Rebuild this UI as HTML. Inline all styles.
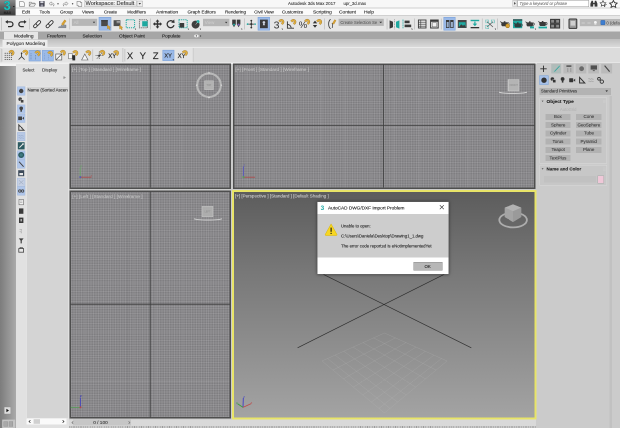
<!DOCTYPE html><html><head><meta charset="utf-8"><title>Autodesk 3ds Max 2017</title><style>
html,body{margin:0;padding:0}
body{width:620px;height:428px;overflow:hidden;background:#cbcbcb;font-family:"Liberation Sans",sans-serif;position:relative;color:#222}
#o{position:absolute;left:0;top:0;width:1240px;height:856px;transform:scale(.5);transform-origin:0 0;will-change:transform;overflow:hidden}
#w{position:relative;zoom:2;width:620px;height:428px;overflow:hidden;background:#cbcbcb}
.a{position:absolute}
.t{position:absolute;white-space:nowrap;line-height:1;transform-origin:0 50%;-webkit-text-stroke:.1px currentColor}
svg{position:absolute;overflow:visible}
.vp{position:absolute;background-color:#7f7e81;border:1.5px solid #4e4e4e;box-sizing:border-box;overflow:hidden;
 background-image:repeating-linear-gradient(90deg,rgba(255,255,255,.10) 0,rgba(255,255,255,.10) 1px,transparent 1px,transparent 2.45px),repeating-linear-gradient(0deg,rgba(255,255,255,.10) 0,rgba(255,255,255,.10) 1px,transparent 1px,transparent 2.45px)}
</style></head><body><div id="o"><div id="w">
<div class="a" style="left:0.00px;top:0.00px;width:620.00px;height:7.60px;background:#f7f7f7;"></div>
<div class="a" style="left:0.00px;top:7.60px;width:620.00px;height:7.60px;background:#fbfbfb;"></div>
<div class="a" style="left:15.60px;top:7.50px;width:604.40px;height:0.80px;background:#cfcfcf;"></div>
<div class="a" style="left:0.00px;top:15.20px;width:620.00px;height:0.80px;background:#d0d0d0;"></div>
<div class="a" style="left:0.00px;top:16.00px;width:620.00px;height:15.30px;background:#e6e6e6;"></div>
<div class="a" style="left:0.00px;top:31.30px;width:620.00px;height:7.90px;background:#a6a6a6;"></div>
<div class="a" style="left:0.00px;top:39.20px;width:620.00px;height:8.00px;background:linear-gradient(#bebebe,#dadada);"></div>
<div class="a" style="left:0.00px;top:47.20px;width:620.00px;height:15.20px;background:#dcdcdc;"></div>
<div class="a" style="left:2.00px;top:47.60px;width:120.40px;height:14.80px;background:#e4e4e4;"></div>
<div class="a" style="left:124.00px;top:47.60px;width:69.00px;height:14.80px;background:#e4e4e4;"></div>
<div class="a" style="left:0.00px;top:47.20px;width:620.00px;height:0.60px;background:#ececec;"></div>
<div class="a" style="left:0.00px;top:62.40px;width:620.00px;height:1.60px;background:#efefef;"></div>
<div class="t" style="left:22.00px;top:9.50px;font-size:4.75px;color:#1c1c1c;transform:scaleX(0.977);">Edit</div>
<div class="t" style="left:39.50px;top:9.50px;font-size:4.75px;color:#1c1c1c;transform:scaleX(0.947);">Tools</div>
<div class="t" style="left:60.00px;top:9.50px;font-size:4.75px;color:#1c1c1c;transform:scaleX(0.985);">Group</div>
<div class="t" style="left:82.00px;top:9.50px;font-size:4.75px;color:#1c1c1c;transform:scaleX(0.953);">Views</div>
<div class="t" style="left:104.00px;top:9.50px;font-size:4.75px;color:#1c1c1c;transform:scaleX(0.912);">Create</div>
<div class="t" style="left:127.00px;top:9.50px;font-size:4.75px;color:#1c1c1c;transform:scaleX(0.986);">Modifiers</div>
<div class="t" style="left:155.80px;top:9.50px;font-size:4.75px;color:#1c1c1c;transform:scaleX(1.051);">Animation</div>
<div class="t" style="left:187.50px;top:9.50px;font-size:4.75px;color:#1c1c1c;transform:scaleX(0.966);">Graph Editors</div>
<div class="t" style="left:225.00px;top:9.50px;font-size:4.75px;color:#1c1c1c;transform:scaleX(0.958);">Rendering</div>
<div class="t" style="left:254.00px;top:9.50px;font-size:4.75px;color:#1c1c1c;transform:scaleX(0.966);">Civil View</div>
<div class="t" style="left:281.80px;top:9.50px;font-size:4.75px;color:#1c1c1c;transform:scaleX(0.945);">Customize</div>
<div class="t" style="left:313.00px;top:9.50px;font-size:4.75px;color:#1c1c1c;transform:scaleX(1.017);">Scripting</div>
<div class="t" style="left:339.00px;top:9.50px;font-size:4.75px;color:#1c1c1c;transform:scaleX(1.022);">Content</div>
<div class="t" style="left:363.80px;top:9.50px;font-size:4.75px;color:#1c1c1c;transform:scaleX(1.024);">Help</div>
<div class="t" style="left:288.00px;top:1.00px;font-size:4.75px;color:#333;transform:scaleX(0.932);">Autodesk 3ds Max 2017</div>
<div class="t" style="left:343.50px;top:1.00px;font-size:4.75px;color:#333;transform:scaleX(0.897);">upr_3d.max</div>
<div class="a" style="left:84.00px;top:0.00px;width:52.40px;height:6.80px;background:linear-gradient(#fdfdfd,#dedede);border:.5px solid #c0c0c0;box-sizing:border-box"></div>
<div class="t" style="left:85.60px;top:0.50px;font-size:5.50px;color:#333;transform:scaleX(1.019);">Workspace: Default</div>
<div class="a" style="left:517.50px;top:0.00px;width:71.50px;height:7.00px;background:#fff;border:.5px solid #999;box-sizing:border-box"></div>
<div class="t" style="left:519.60px;top:1.00px;font-size:4.75px;color:#707070;font-style:italic;transform:scaleX(0.869);">Type a keyword or phrase</div>
<div class="a" style="left:4.00px;top:32.00px;width:34.00px;height:7.40px;background:#e6e6e6;"></div>
<div class="t" style="left:14.00px;top:33.50px;font-size:4.75px;color:#1c1c1c;transform:scaleX(1.012);">Modeling</div>
<div class="t" style="left:47.00px;top:33.50px;font-size:4.75px;color:#1c1c1c;transform:scaleX(0.986);">Freeform</div>
<div class="t" style="left:82.50px;top:33.50px;font-size:4.75px;color:#1c1c1c;">Selection</div>
<div class="t" style="left:119.00px;top:33.50px;font-size:4.75px;color:#1c1c1c;">Object Paint</div>
<div class="t" style="left:162.00px;top:33.50px;font-size:4.75px;color:#1c1c1c;transform:scaleX(0.987);">Populate</div>
<div class="a" style="left:2.50px;top:40.00px;width:44.90px;height:7.40px;background:#ededed;"></div>
<div class="t" style="left:6.50px;top:41.00px;font-size:4.75px;color:#333;transform:scaleX(1.025);">Polygon Modeling</div>
<svg width="620" height="428" viewBox="0 0 620 428" style="left:0;top:0"><defs><linearGradient id="lg" x1="0" y1="0" x2="0" y2="1"><stop offset="0" stop-color="#8a8a8a"/><stop offset=".55" stop-color="#5a5a5a"/><stop offset="1" stop-color="#3c3c3c"/></linearGradient></defs>
<rect x="0" y="0" width="15.6" height="14.6" fill="url(#lg)"/>
<rect x="0" y="14.6" width="15.6" height=".8" fill="#2a2a2a"/>
<text x="3.6" y="9.9" font-size="12.6" font-weight="bold" fill="#22c4c0" stroke="#0f8f8f" stroke-width=".3">3</text>
<text x="3.6" y="13.8" font-size="3.4" font-weight="bold" fill="#1a1a1a">MAX</text>
<path d="M12.8 6 h2 l-1 1.3z" fill="#111"/>
<path d="M19.5 1.6 h3.6 l1.4 1.4 v3.3 h-5z" fill="#fafafa" stroke="#808080" stroke-width=".6"/>
<path d="M29.2 6.2 v-4 h2 l.7 .8 h2.6 v1 M29.2 6.2 l1.4 -2.4 h5 l-1.4 2.4z" fill="#f4f4f4" stroke="#808080" stroke-width=".6"/>
<rect x="39.2" y="1" width="5.4" height="5.6" rx=".5" fill="#3c3c48"/><rect x="40.3" y="1.2" width="3.2" height="2" fill="#d8d8e0"/><rect x="40.6" y="4.4" width="2.6" height="2" fill="#9a9aa8"/>
<path d="M49 3.6 l2.2 -1.8 v1.1 c3 0 3.6 1.6 2.2 3.3 c.3 -1.4 -.6 -1.9 -2.2 -1.9 v1.1z" fill="#f0f0f0" stroke="#808080" stroke-width=".5"/>
<circle cx="58" cy="3.8" r=".7" fill="#444"/>
<path d="M68.2 3.6 l-2.2 -1.8 v1.1 c-3 0 -3.6 1.6 -2.2 3.3 c-.3 -1.4 .6 -1.9 2.2 -1.9 v1.1z" fill="#f0f0f0" stroke="#808080" stroke-width=".5"/>
<circle cx="72.6" cy="3.8" r=".7" fill="#444"/>
<path d="M77 1.4 h3.4 v1 h1.4 v4 h-3.6 v-1 h-1.2z" fill="#f4f4f4" stroke="#808080" stroke-width=".6"/>
<path d="M137 1 h5.6 v5.6 h-5.6z" fill="#ececec" stroke="#9a9a9a" stroke-width=".4"/><path d="M138.6 3 h2.4 l-1.2 1.6z" fill="#333"/>
<rect x="512.8" y=".4" width="4.2" height="6" fill="#e8e8e8" stroke="#aaa" stroke-width=".4"/><path d="M514.2 2 l1.6 1.4 l-1.6 1.4z" fill="#333"/>
<path d="M590.4 6.6 v-3 l1.2 -2.8 h1.3 l.5 2.2 h1 l.5 -2.2 h1.3 l1.2 2.8 v3 h-2.8 v-2.4 h-1.4 v2.4z" fill="#3a3a3a"/>
<path d="M603 .6 l.9 1.9 l2 .3 l-1.5 1.4 l.4 2 l-1.8 -1 l-1.8 1 l.4 -2 l-1.5 -1.4 l2 -.3z" fill="#f4f4f4" stroke="#333" stroke-width=".6"/><path d="M604.6 7 c0 -1.6 1 -2.6 2 -2.6" stroke="#333" stroke-width=".7" fill="none"/>
<path d="M613.4 .4 l1.2 2.3 l2.6 .4 l-1.9 1.8 l.5 2.5 l-2.4 -1.3 l-2.4 1.3 l.5 -2.5 l-1.9 -1.8 l2.6 -.4z" fill="#fafafa" stroke="#2e2e2e" stroke-width=".8"/>
<rect x="1.3" y="17.5" width=".6" height="13" fill="#b0b0b0"/>
<path d="M7.4 21.9 h3.2 a2.35 2.35 0 0 1 0 4.7 h-2.6" fill="none" stroke="#2e2e2e" stroke-width="1.25"/><path d="M5.2 21.9 l2.6 -1.9 v3.8z" fill="#2e2e2e"/>
<path d="M24.4 21.9 h-3.2 a2.35 2.35 0 0 0 0 4.7 h2.6" fill="none" stroke="#2e2e2e" stroke-width="1.25"/><path d="M26.6 21.9 l-2.6 -1.9 v3.8z" fill="#2e2e2e"/>
<rect x="29.10" y="18.5" width=".7" height="11.0" fill="#bcbcbc"/>
<g transform="rotate(-45 37.1 24.2)" fill="#f2f2f2" stroke="#333" stroke-width=".85"><rect x="32.7" y="22.8" width="5.2" height="2.8" rx="1.4"/><rect x="36.300000000000004" y="22.8" width="5.2" height="2.8" rx="1.4"/></g>
<g transform="rotate(-45 49.6 24.2)" fill="#f2f2f2" stroke="#333" stroke-width=".85"><rect x="45.2" y="22.8" width="5.2" height="2.8" rx="1.4"/><rect x="48.800000000000004" y="22.8" width="5.2" height="2.8" rx="1.4"/></g>
<path d="M58.4 27.6 c1 -2.6 1.6 .6 2.6 -1.8 c.8 -2 1.4 1.4 2.4 -.6 c.8 -1.6 1.6 .8 2.6 -.4 v3 h-7.6z" fill="#8e949c" stroke="#6a7078" stroke-width=".4"/>
<path d="M61.4 24.2 l3.2 -4.4 l1.6 1.2 l-3.2 4.4z" fill="#d9a233" stroke="#a87818" stroke-width=".3"/>
<rect x="69.40" y="18.5" width=".7" height="11.0" fill="#bcbcbc"/>
<rect x="71.8" y="18.8" width="25.40" height="7.10" fill="#b6b6b6"/>
<text x="73.60" y="23.90" font-size="4.4" fill="#d0d0d0">All</text>
<path d="M92.80 21.75 h2.4 l-1.2 1.5z" fill="#333"/>
<rect x="99" y="17.3" width="12.00" height="12.90" fill="#9bbae8" stroke="#7aa2da" stroke-width=".6"/>
<rect x="101.2" y="20.2" width="6.6" height="5.9" fill="#4a4a4a"/><rect x="101.2" y="20.2" width="6.6" height="1" fill="#333"/>
<path d="M107.20 25.00 l3.4 2.2 l-1.3 .3 l.9 1.6 l-.9 .5 l-.9 -1.6 l-1 .9z" fill="#d9a233" stroke="#a87818" stroke-width=".3"/>
<rect x="113.6" y="20.2" width="6.8" height="5.9" fill="#4e4e4e"/><path d="M116.6 21.4 h3.4 M116.6 22.8 h3.4" stroke="#cfcfcf" stroke-width=".6"/>
<path d="M119.40 25.20 l3.4 2.2 l-1.3 .3 l.9 1.6 l-.9 .5 l-.9 -1.6 l-1 .9z" fill="#d9a233" stroke="#a87818" stroke-width=".3"/>
<rect x="126.2" y="19.8" width="8.4" height="8" fill="none" stroke="#1fa9a0" stroke-width="1" stroke-dasharray="1.2 .9"/>
<path d="M134.6 28.6 h1.4 v1.4z" fill="#333"/>
<rect x="139.4" y="19.8" width="8" height="8" fill="none" stroke="#555" stroke-width=".9" stroke-dasharray="1.2 .9"/><rect x="142.2" y="21.2" width="5.4" height="5.2" fill="#1fa9a0"/>
<rect x="150.10" y="18.5" width=".7" height="11.0" fill="#bcbcbc"/>
<path d="M157.5 19.4 l1.9 2.2 h-1.2 v1.7 h1.7 v-1.2 l2.2 1.9 l-2.2 1.9 v-1.2 h-1.7 v1.7 h1.2 l-1.9 2.2 l-1.9 -2.2 h1.2 v-1.7 h-1.7 v1.2 l-2.2 -1.9 l2.2 -1.9 v1.2 h1.7 v-1.7 h-1.2z" fill="#333"/>
<path d="M173 21.6 a3.5 3.5 0 1 0 1 3.6" fill="none" stroke="#333" stroke-width="1.3"/><path d="M171.2 22.6 l3.4 .4 l-.4 -3.6z" fill="#333"/>
<rect x="179" y="19.8" width="8.2" height="8" fill="none" stroke="#1fa9a0" stroke-width="1" stroke-dasharray="1.2 .9"/><rect x="179.6" y="23" width="4.6" height="4.6" fill="#3a3a3a"/>
<path d="M187.4 28.6 h1.4 v1.4z" fill="#333"/>
<circle cx="195.6" cy="24.6" r="4" fill="#3e3e3e"/><circle cx="198" cy="21.6" r="1.5" fill="#1fa9a0"/><path d="M195.6 24.6 l2.4 -3" stroke="#ddd" stroke-width=".5"/>
<path d="M199.6 28.6 h1.4 v1.4z" fill="#333"/>
<rect x="203" y="18.8" width="26.40" height="7.40" fill="#b6b6b6"/>
<text x="204.80" y="24.05" font-size="4.4" fill="#d0d0d0">View</text>
<path d="M225.00 21.90 h2.4 l-1.2 1.5z" fill="#333"/>
<path d="M232.2 19.6 h3.6 v4.6 l-1.8 3 l-1.8 -3z M236.8 19.6 h3.6 v4.6 l-1.8 3 l-1.8 -3z" fill="#3c3c3c"/><circle cx="234" cy="24.6" r="1" fill="#1fa9a0"/><circle cx="238.6" cy="24.6" r="1" fill="#8a6ac8"/>
<path d="M240.8 28.6 h1.4 v1.4z" fill="#333"/>
<rect x="244.10" y="18.5" width=".7" height="11.0" fill="#bcbcbc"/>
<path d="M251.3 20.4 v7.4 M247.4 24.1 h7.8" stroke="#333" stroke-width=".8"/><circle cx="251.3" cy="24.1" r="1.1" fill="#333"/><circle cx="251.3" cy="20.6" r=".9" fill="#333"/><circle cx="251.3" cy="27.6" r=".9" fill="#333"/><circle cx="247.6" cy="24.1" r=".9" fill="#1fa9a0"/><circle cx="255" cy="24.1" r=".9" fill="#1fa9a0"/>
<rect x="258" y="17.3" width="11.60" height="12.90" fill="#9bbae8" stroke="#7aa2da" stroke-width=".6"/>
<rect x="260" y="19.6" width="7.8" height="8.6" fill="#3a3a3a"/><path d="M263.9 21.2 a1.2 1.2 0 0 1 .6 2.3 l.5 1.8 h-2.2 l.5 -1.8 a1.2 1.2 0 0 1 .6 -2.3z" fill="#cfd6e2"/>
<text x="273.6" y="28.4" font-size="10.5" fill="#333">3</text>
<g transform="rotate(45 281.4 21.9)" fill="none"><path d="M279.65 23.20 L279.65 21.90 A1.75 1.75 0 0 1 283.15 21.90 L283.15 23.20" stroke="#94702a" stroke-width="2.30"/><path d="M279.65 23.20 L279.65 21.90 A1.75 1.75 0 0 1 283.15 21.90 L283.15 23.20" stroke="#dfae40" stroke-width="1.60"/></g>
<path d="M281.4 28.6 h1.4 v1.4z" fill="#333"/>
<path d="M287.4 21.4 v6.8 h6.6 M287.4 24.4 a3.8 3.8 0 0 1 3.8 3.8" fill="none" stroke="#333" stroke-width=".9"/>
<g transform="rotate(45 293.4 21.9)" fill="none"><path d="M291.65 23.20 L291.65 21.90 A1.75 1.75 0 0 1 295.15 21.90 L295.15 23.20" stroke="#94702a" stroke-width="2.30"/><path d="M291.65 23.20 L291.65 21.90 A1.75 1.75 0 0 1 295.15 21.90 L295.15 23.20" stroke="#dfae40" stroke-width="1.60"/></g>
<text x="298.8" y="28.2" font-size="9.5" fill="#333">%</text>
<g transform="rotate(45 307.2 21.8)" fill="none"><path d="M305.45 23.10 L305.45 21.80 A1.75 1.75 0 0 1 308.95 21.80 L308.95 23.10" stroke="#94702a" stroke-width="2.30"/><path d="M305.45 23.10 L305.45 21.80 A1.75 1.75 0 0 1 308.95 21.80 L308.95 23.10" stroke="#dfae40" stroke-width="1.60"/></g>
<path d="M312.8 23.4 l2.2 -2.8 l2.2 2.8z M312.8 25 l2.2 2.8 l2.2 -2.8z" fill="#333"/>
<g transform="rotate(45 319.2 21.9)" fill="none"><path d="M317.45 23.20 L317.45 21.90 A1.75 1.75 0 0 1 320.95 21.90 L320.95 23.20" stroke="#94702a" stroke-width="2.30"/><path d="M317.45 23.20 L317.45 21.90 A1.75 1.75 0 0 1 320.95 21.90 L320.95 23.20" stroke="#dfae40" stroke-width="1.60"/></g>
<rect x="324.10" y="18.5" width=".7" height="11.0" fill="#bcbcbc"/>
<path d="M330.6 19.4 c-2.6 1.6 -2.6 7.6 0 9.4" fill="none" stroke="#333" stroke-width=".8"/><path d="M332 23 l.6 1.4 l-.4 3.6" fill="none" stroke="#333" stroke-width=".7"/>
<path d="M332.4 23.4 l2.2 -3.8 l1.5 .9 l-2.2 3.8z" fill="#d9a233" stroke="#a87818" stroke-width=".3"/>
<rect x="338.6" y="18.8" width="45.20" height="7.10" fill="#b6b6b6"/>
<text x="340.40" y="23.90" font-size="4.5" fill="#4a4a4a" textLength="36.8" lengthAdjust="spacingAndGlyphs">Create Selection Se</text>
<path d="M379.40 21.75 h2.4 l-1.2 1.5z" fill="#333"/>
<rect x="386.70" y="18.5" width=".7" height="11.0" fill="#bcbcbc"/>
<path d="M389.6 20.4 l3.4 1.4 v5.4 l-3.4 1.4z" fill="#3a3a3a"/><path d="M399.4 20.4 l-3.4 1.4 v5.4 l3.4 1.4z" fill="#1fa9a0"/><path d="M394.5 19.4 v9.8" stroke="#555" stroke-width=".5" stroke-dasharray=".9 .7"/>
<path d="M403 19.6 v9.2" stroke="#1fa9a0" stroke-width="1" stroke-dasharray="1.1 .8"/><rect x="404.6" y="20.6" width="5" height="2.6" fill="#3a3a3a"/><rect x="404.6" y="24.6" width="6.6" height="2.6" fill="#3a3a3a"/>
<path d="M411 28.6 h1.4 v1.4z" fill="#333"/>
<rect x="414.20" y="18.5" width=".7" height="11.0" fill="#bcbcbc"/>
<rect x="418.4" y="20" width="7.6" height="8" fill="#ececec" stroke="#3a3a3a" stroke-width=".9"/><path d="M418.4 22.2 h7.6 M418.4 24.2 h7.6 M418.4 26.2 h7.6 M420.8 20 v8" stroke="#3a3a3a" stroke-width=".6"/>
<rect x="430.6" y="20" width="7.6" height="8" fill="#dcdcdc" stroke="#3a3a3a" stroke-width="1"/><rect x="430.6" y="20" width="7.6" height="1.8" fill="#3a3a3a"/><rect x="432.2" y="22.8" width="4.4" height="4" fill="#f0f0f0" stroke="#555" stroke-width=".4"/>
<rect x="440.90" y="18.5" width=".7" height="11.0" fill="#bcbcbc"/>
<rect x="443.8" y="17.3" width="11.40" height="12.90" fill="#9bbae8" stroke="#7aa2da" stroke-width=".6"/>
<rect x="446" y="20" width="3.4" height="8" fill="#3a3a3a"/><rect x="450.2" y="20" width="3.4" height="8" fill="#3a3a3a"/><rect x="446.7" y="22" width="2" height="5.2" fill="#9ab0cc"/><rect x="450.9" y="22" width="2" height="5.2" fill="#9ab0cc"/>
<rect x="457.8" y="20" width="8.8" height="8" fill="#454545"/><rect x="458.8" y="22.2" width="6.8" height="5" fill="#1fa9a0"/><path d="M458.8 27.2 l2.4 -3 l1.8 1.6 l1.4 -1.2 l1.2 2.6z" fill="#3a3a3a"/>
<rect x="470.6" y="19.8" width="8.6" height="1.4" fill="#1fa9a0"/><path d="M474.9 21.6 v3" stroke="#1fa9a0" stroke-width="1.2"/><path d="M472.6 23.6 h4.6 l-2.3 2.6z" fill="#1fa9a0"/><rect x="470.6" y="27" width="8.6" height="1.3" fill="#333"/>
<rect x="481.90" y="18.5" width=".7" height="11.0" fill="#bcbcbc"/>
<path d="M487 21.6 l6 5.4 M493 21.6 l-6 5.4" stroke="#555" stroke-width=".7"/><rect x="485.8" y="20" width="2.8" height="2.8" fill="none" stroke="#1fa9a0" stroke-width=".6" stroke-dasharray=".8 .5"/><rect x="485.8" y="25.6" width="2.8" height="2.8" fill="none" stroke="#1fa9a0" stroke-width=".6" stroke-dasharray=".8 .5"/><rect x="491.6" y="20" width="2.8" height="2.8" fill="none" stroke="#1fa9a0" stroke-width=".6" stroke-dasharray=".8 .5"/>
<path d="M494.6 28.6 h1.4 v1.4z" fill="#333"/>
<rect x="497.10" y="18.5" width=".7" height="11.0" fill="#bcbcbc"/>
<path d="M502.00 22.20 h5.2 c1 1.2 1 3 -.2 4 h-4.8 c-1.2 -1 -1.2 -2.8 -.2 -4z M503.80 21.20 h1.6 v1 h-1.6z M502.00 23.80 l-2 -2.2 l.6 -.3 l1.9 1.4z" fill="#3a3a3a"/>
<path d="M507.40 22.80 c2.2 -.6 2.2 2.6 .1 2.4" fill="none" stroke="#3a3a3a" stroke-width=".8"/>
<circle cx="507.6" cy="25.8" r="2" fill="#d9a233" stroke="#8a6410" stroke-width=".5"/>
<rect x="513" y="19.2" width="9.2" height="9" fill="#1fa9a0"/><rect x="513" y="19.2" width="9.2" height="1.6" fill="#3a5a5a"/>
<path d="M515.20 23.40 h5.2 c1 1.2 1 3 -.2 4 h-4.8 c-1.2 -1 -1.2 -2.8 -.2 -4z M517.00 22.40 h1.6 v1 h-1.6z M515.20 25.00 l-2 -2.2 l.6 -.3 l1.9 1.4z" fill="#2e3e3e"/>
<path d="M520.60 24.00 c2.2 -.6 2.2 2.6 .1 2.4" fill="none" stroke="#2e3e3e" stroke-width=".8"/>
<path d="M527.20 22.40 h5.2 c1 1.2 1 3 -.2 4 h-4.8 c-1.2 -1 -1.2 -2.8 -.2 -4z M529.00 21.40 h1.6 v1 h-1.6z M527.20 24.00 l-2 -2.2 l.6 -.3 l1.9 1.4z" fill="#3a3a3a"/>
<path d="M532.60 23.00 c2.2 -.6 2.2 2.6 .1 2.4" fill="none" stroke="#3a3a3a" stroke-width=".8"/>
<path d="M530 26.4 h4 v2 h-4z" fill="#1fa9a0"/>
<path d="M534.6 28.6 h1.4 v1.4z" fill="#333"/>
<path d="M540.00 22.00 h5.2 c1 1.2 1 3 -.2 4 h-4.8 c-1.2 -1 -1.2 -2.8 -.2 -4z M541.80 21.00 h1.6 v1 h-1.6z M540.00 23.60 l-2 -2.2 l.6 -.3 l1.9 1.4z" fill="#3a3a3a"/>
<path d="M545.40 22.60 c2.2 -.6 2.2 2.6 .1 2.4" fill="none" stroke="#3a3a3a" stroke-width=".8"/>
<path d="M538.6 26.6 h8.4 v1.8 h-8.4z" fill="#1fa9a0"/>
<rect x="550.6" y="19.4" width="4" height="3.8" fill="#8a8a8a" stroke="#3a3a3a" stroke-width="1.1"/>
<rect x="550.6" y="24.2" width="4" height="3.8" fill="#8a8a8a" stroke="#3a3a3a" stroke-width="1.1"/>
<rect x="555.6" y="19.4" width="4" height="3.8" fill="#8a8a8a" stroke="#3a3a3a" stroke-width="1.1"/>
<rect x="555.6" y="24.2" width="4" height="3.8" fill="#8a8a8a" stroke="#3a3a3a" stroke-width="1.1"/>
<rect x="563.30" y="18.5" width=".7" height="11.0" fill="#bcbcbc"/>
<rect x="569" y="19" width="7.8" height="9.4" rx=".8" fill="#9c9c9c" stroke="#333" stroke-width="1"/><rect x="570.6" y="21" width="4.6" height="4.6" fill="#d0d0d0"/>
<rect x="579.8" y="19" width="40.2" height="7.2" fill="#b8b8b8"/>
<path d="M581.6 23 h3.2 M587.4 23 h3.2" stroke="#d8d8d8" stroke-width=".8"/>
<circle cx="595.4" cy="22.4" r="1.7" fill="#f4f4f4" stroke="#999" stroke-width=".3"/><rect x="594.4" y="23.6" width="2" height="1.2" fill="#ddd"/>
<rect x="600.8" y="20.4" width="4.2" height="4.4" rx=".6" fill="#3e7ed0" stroke="#2a5aa0" stroke-width=".4"/>
<text x="606.4" y="24.3" font-size="4.3" fill="#444">0 (defa</text>
<rect x="194.2" y="34.6" width="4.4" height="2.6" rx="1.3" fill="#f2f2f2"/><circle cx="196.4" cy="35.9" r=".7" fill="#555"/><path d="M200 35.2 l1.4 .8 l-1.4 .8z" fill="#333"/>
<rect x="1.6" y="49" width=".6" height="12.5" fill="#b0b0b0"/>
<rect x="29" y="50.4" width="11.40" height="10.60" fill="#9bbae8" stroke="#7aa2da" stroke-width=".6"/>
<rect x="42.2" y="50.4" width="11.20" height="10.60" fill="#9bbae8" stroke="#7aa2da" stroke-width=".6"/>
<rect x="4.70" y="52.80" width="1" height="1" fill="#4a4a4a"/>
<rect x="4.70" y="54.85" width="1" height="1" fill="#4a4a4a"/>
<rect x="4.70" y="56.90" width="1" height="1" fill="#4a4a4a"/>
<rect x="4.70" y="58.95" width="1" height="1" fill="#4a4a4a"/>
<rect x="6.75" y="52.80" width="1" height="1" fill="#4a4a4a"/>
<rect x="6.75" y="54.85" width="1" height="1" fill="#4a4a4a"/>
<rect x="6.75" y="56.90" width="1" height="1" fill="#4a4a4a"/>
<rect x="6.75" y="58.95" width="1" height="1" fill="#4a4a4a"/>
<rect x="8.80" y="52.80" width="1" height="1" fill="#4a4a4a"/>
<rect x="8.80" y="54.85" width="1" height="1" fill="#4a4a4a"/>
<rect x="8.80" y="56.90" width="1" height="1" fill="#4a4a4a"/>
<rect x="8.80" y="58.95" width="1" height="1" fill="#4a4a4a"/>
<rect x="10.85" y="52.80" width="1" height="1" fill="#4a4a4a"/>
<rect x="10.85" y="54.85" width="1" height="1" fill="#4a4a4a"/>
<rect x="10.85" y="56.90" width="1" height="1" fill="#4a4a4a"/>
<rect x="10.85" y="58.95" width="1" height="1" fill="#4a4a4a"/>
<g transform="rotate(45 11.5 52.8)" fill="none"><path d="M9.75 54.10 L9.75 52.80 A1.75 1.75 0 0 1 13.25 52.80 L13.25 54.10" stroke="#94702a" stroke-width="2.30"/><path d="M9.75 54.10 L9.75 52.80 A1.75 1.75 0 0 1 13.25 52.80 L13.25 54.10" stroke="#dfae40" stroke-width="1.60"/></g>
<path d="M21.6 53.4 v3.2 l-3 3 M21.6 56.6 l3 3" fill="none" stroke="#333" stroke-width=".8"/><circle cx="21.6" cy="53.2" r=".8" fill="#333"/>
<g transform="rotate(45 25.3 52.6)" fill="none"><path d="M23.55 53.90 L23.55 52.60 A1.75 1.75 0 0 1 27.05 52.60 L27.05 53.90" stroke="#94702a" stroke-width="2.30"/><path d="M23.55 53.90 L23.55 52.60 A1.75 1.75 0 0 1 27.05 52.60 L27.05 53.90" stroke="#dfae40" stroke-width="1.60"/></g>
<path d="M31 53.4 v6.6 M35.6 55 v5" stroke="#5c7aa8" stroke-width=".7" stroke-dasharray=".9 .7"/>
<g transform="rotate(45 37.5 53.4)" fill="none"><path d="M35.75 54.70 L35.75 53.40 A1.75 1.75 0 0 1 39.25 53.40 L39.25 54.70" stroke="#94702a" stroke-width="2.30"/><path d="M35.75 54.70 L35.75 53.40 A1.75 1.75 0 0 1 39.25 53.40 L39.25 54.70" stroke="#dfae40" stroke-width="1.60"/></g>
<path d="M44.4 53.4 v6.6 M48.6 55.4 v4.6" stroke="#7c9ac8" stroke-width=".7" stroke-dasharray=".9 .7"/>
<g transform="rotate(45 50.3 53.8)" fill="none"><path d="M48.55 55.10 L48.55 53.80 A1.75 1.75 0 0 1 52.05 53.80 L52.05 55.10" stroke="#94702a" stroke-width="2.30"/><path d="M48.55 55.10 L48.55 53.80 A1.75 1.75 0 0 1 52.05 53.80 L52.05 55.10" stroke="#dfae40" stroke-width="1.60"/></g>
<rect x="55.8" y="54" width="6" height="6" fill="#f6f6f6" stroke="#444" stroke-width=".6"/><path d="M55.8 60 l6 -6" stroke="#444" stroke-width=".6"/>
<g transform="rotate(45 62.9 52.8)" fill="none"><path d="M61.15 54.10 L61.15 52.80 A1.75 1.75 0 0 1 64.65 52.80 L64.65 54.10" stroke="#94702a" stroke-width="2.30"/><path d="M61.15 54.10 L61.15 52.80 A1.75 1.75 0 0 1 64.65 52.80 L64.65 54.10" stroke="#dfae40" stroke-width="1.60"/></g>
<rect x="68.6" y="53.4" width="3.6" height="5.4" fill="#f6f6f6" stroke="#555" stroke-width=".5"/><rect x="72.4" y="55.2" width="2.8" height="5.2" fill="#2a2a2a"/>
<g transform="rotate(45 75.3 53.0)" fill="none"><path d="M73.55 54.30 L73.55 53.00 A1.75 1.75 0 0 1 77.05 53.00 L77.05 54.30" stroke="#94702a" stroke-width="2.30"/><path d="M73.55 54.30 L73.55 53.00 A1.75 1.75 0 0 1 77.05 53.00 L77.05 54.30" stroke="#dfae40" stroke-width="1.60"/></g>
<path d="M81.6 60 l3.2 -6 l3.2 6z" fill="#f6f6f6" stroke="#555" stroke-width=".6"/>
<g transform="rotate(45 88.3 53.0)" fill="none"><path d="M86.55 54.30 L86.55 53.00 A1.75 1.75 0 0 1 90.05 53.00 L90.05 54.30" stroke="#94702a" stroke-width="2.30"/><path d="M86.55 54.30 L86.55 53.00 A1.75 1.75 0 0 1 90.05 53.00 L90.05 54.30" stroke="#dfae40" stroke-width="1.60"/></g>
<rect x="92.40" y="49.5" width=".7" height="11.5" fill="#bcbcbc"/>
<path d="M99.2 51.6 v7.6 M95.6 55.6 h7.2 M96.8 58.6 l4.8 -5.4" stroke="#333" stroke-width=".6" stroke-dasharray="1 .6"/><circle cx="99.2" cy="55.6" r="1" fill="#333"/>
<g transform="rotate(45 102.3 52.8)" fill="none"><path d="M100.55 54.10 L100.55 52.80 A1.75 1.75 0 0 1 104.05 52.80 L104.05 54.10" stroke="#94702a" stroke-width="2.30"/><path d="M100.55 54.10 L100.55 52.80 A1.75 1.75 0 0 1 104.05 52.80 L104.05 54.10" stroke="#dfae40" stroke-width="1.60"/></g>
<text x="108.2" y="58" font-size="6" fill="#2a2a2a" stroke="#2a2a2a" stroke-width=".2">XY</text>
<g transform="rotate(45 116.1 53.0)" fill="none"><path d="M114.35 54.30 L114.35 53.00 A1.75 1.75 0 0 1 117.85 53.00 L117.85 54.30" stroke="#94702a" stroke-width="2.30"/><path d="M114.35 54.30 L114.35 53.00 A1.75 1.75 0 0 1 117.85 53.00 L117.85 54.30" stroke="#dfae40" stroke-width="1.60"/></g>
<rect x="122.4" y="48" width=".7" height="14" fill="#c4c4c4"/><rect x="124.6" y="49" width=".6" height="12.5" fill="#b0b0b0"/>
<g font-size="9.6" fill="#2a2a2a" stroke="#2a2a2a" stroke-width=".15"><text x="126.8" y="58.8">X</text><text x="139.6" y="58.8">Y</text><text x="152.8" y="58.8">Z</text></g>
<rect x="162.8" y="50.2" width="11.20" height="10.40" fill="#9bbae8" stroke="#7aa2da" stroke-width=".6"/>
<text x="164.4" y="57.4" font-size="5.6" fill="#2a2a2a" stroke="#2a2a2a" stroke-width=".2">XY</text><path d="M172.4 59.2 h1.4 v1.4z" fill="#333"/>
<text x="177.6" y="57.8" font-size="6" fill="#2a2a2a" stroke="#2a2a2a" stroke-width=".2">XY</text>
<g transform="rotate(45 184.9 53.0)" fill="none"><path d="M183.15 54.30 L183.15 53.00 A1.75 1.75 0 0 1 186.65 53.00 L186.65 54.30" stroke="#94702a" stroke-width="2.30"/><path d="M183.15 54.30 L183.15 53.00 A1.75 1.75 0 0 1 186.65 53.00 L186.65 54.30" stroke="#dfae40" stroke-width="1.60"/></g>
<rect x="192.8" y="48" width=".7" height="14" fill="#c4c4c4"/></svg>
<div class="a" style="left:0.00px;top:64.00px;width:16.00px;height:2.00px;background:#f4f4f4;"></div>
<div class="a" style="left:0.00px;top:66.00px;width:16.00px;height:362.00px;background:linear-gradient(90deg,#7c7c7c,#aaaaaa);"></div>
<div class="a" style="left:16.00px;top:64.00px;width:53.00px;height:364.00px;background:#e1e1e1;"></div>
<div class="a" style="left:26.20px;top:86.20px;width:41.60px;height:331.80px;background:#d4d4d4;border-top:.6px solid #f2f2f2;border-left:.6px solid #f2f2f2;box-sizing:border-box"></div>
<div class="t" style="left:22.70px;top:67.50px;font-size:4.75px;color:#333;transform:scaleX(0.901);">Select</div>
<div class="t" style="left:42.10px;top:67.50px;font-size:4.75px;color:#333;transform:scaleX(0.976);">Display</div>
<div class="t" style="left:63.00px;top:75.00px;font-size:4.75px;color:#555;transform:scaleX(0.984);">»</div>
<div class="t" style="left:27.40px;top:87.50px;font-size:4.75px;color:#222;transform:scaleX(0.917);">Name (Sorted Ascen</div>
<div class="a" style="left:26.50px;top:418.60px;width:40.00px;height:5.80px;background:#fafafa;"></div>
<div class="vp" style="left:69.3px;top:63.4px;width:161.5px;height:125.8px"></div>
<div class="vp" style="left:233px;top:63.4px;width:302.6px;height:125.8px"></div>
<div class="vp" style="left:69.3px;top:190.6px;width:161.5px;height:228px"></div>
<div class="a" style="left:231.8px;top:190.1px;width:304.6px;height:229.4px;box-sizing:border-box;border:2px solid #e8e468;background:linear-gradient(#5c5c5c 0,#787878 36%,#a3a3a3 100%)"></div>
<div class="a" style="left:536.50px;top:63.00px;width:83.50px;height:365.00px;background:#cbcbcb;"></div>
<div class="a" style="left:539.50px;top:87.80px;width:71.50px;height:7.20px;background:#b3b3b3;"></div>
<div class="t" style="left:541.20px;top:88.50px;font-size:4.75px;color:#333;transform:scaleX(0.877);">Standard Primitives</div>
<div class="a" style="left:539.40px;top:97.60px;width:67.60px;height:65.80px;background:#c7c7c7;border:.5px solid #d8d8d8;box-sizing:border-box"></div>
<div class="t" style="left:546.30px;top:99.00px;font-size:4.75px;color:#222;font-weight:bold;transform:scaleX(1.017);">Object Type</div>
<div class="t" style="left:560.00px;top:107.00px;font-size:4.75px;color:#b4b4b4;transform:scaleX(0.880);">AutoGrid</div>
<div class="a" style="left:545.30px;top:113.80px;width:25.40px;height:6.00px;background:#b2b2b2;"></div>
<div class="t" style="left:554.17px;top:114.00px;font-size:4.75px;color:#3a3a3a;transform:scaleX(0.937);">Box</div>
<div class="a" style="left:576.20px;top:113.80px;width:25.40px;height:6.00px;background:#b2b2b2;"></div>
<div class="t" style="left:583.58px;top:114.00px;font-size:4.75px;color:#3a3a3a;transform:scaleX(0.937);">Cone</div>
<div class="a" style="left:545.30px;top:122.06px;width:25.40px;height:6.00px;background:#b2b2b2;"></div>
<div class="t" style="left:550.82px;top:122.50px;font-size:4.75px;color:#3a3a3a;transform:scaleX(0.937);">Sphere</div>
<div class="a" style="left:576.20px;top:122.06px;width:25.40px;height:6.00px;background:#b2b2b2;"></div>
<div class="t" style="left:577.52px;top:122.50px;font-size:4.75px;color:#3a3a3a;transform:scaleX(0.937);">GeoSphere</div>
<div class="a" style="left:545.30px;top:130.32px;width:25.40px;height:6.00px;background:#b2b2b2;"></div>
<div class="t" style="left:549.84px;top:130.50px;font-size:4.75px;color:#3a3a3a;transform:scaleX(0.937);">Cylinder</div>
<div class="a" style="left:576.20px;top:130.32px;width:25.40px;height:6.00px;background:#b2b2b2;"></div>
<div class="t" style="left:583.91px;top:130.50px;font-size:4.75px;color:#3a3a3a;transform:scaleX(0.937);">Tube</div>
<div class="a" style="left:545.30px;top:138.58px;width:25.40px;height:6.00px;background:#b2b2b2;"></div>
<div class="t" style="left:552.56px;top:139.00px;font-size:4.75px;color:#3a3a3a;transform:scaleX(0.937);">Torus</div>
<div class="a" style="left:576.20px;top:138.58px;width:25.40px;height:6.00px;background:#b2b2b2;"></div>
<div class="t" style="left:580.74px;top:139.00px;font-size:4.75px;color:#3a3a3a;transform:scaleX(0.937);">Pyramid</div>
<div class="a" style="left:545.30px;top:146.84px;width:25.40px;height:6.00px;background:#b2b2b2;"></div>
<div class="t" style="left:551.32px;top:147.00px;font-size:4.75px;color:#3a3a3a;transform:scaleX(0.937);">Teapot</div>
<div class="a" style="left:576.20px;top:146.84px;width:25.40px;height:6.00px;background:#b2b2b2;"></div>
<div class="t" style="left:583.21px;top:147.00px;font-size:4.75px;color:#3a3a3a;transform:scaleX(0.937);">Plane</div>
<div class="a" style="left:545.30px;top:155.10px;width:25.40px;height:6.00px;background:#b2b2b2;"></div>
<div class="t" style="left:549.59px;top:155.50px;font-size:4.75px;color:#3a3a3a;transform:scaleX(0.937);">TextPlus</div>
<div class="a" style="left:539.40px;top:164.90px;width:67.60px;height:20.50px;background:#c7c7c7;border:.5px solid #d8d8d8;box-sizing:border-box"></div>
<div class="t" style="left:546.30px;top:166.50px;font-size:4.75px;color:#222;font-weight:bold;transform:scaleX(0.953);">Name and Color</div>
<div class="a" style="left:544.00px;top:176.00px;width:52.00px;height:6.60px;background:#c1c1c1;"></div>
<div class="a" style="left:597.30px;top:175.50px;width:6.50px;height:8.00px;background:#efc8d8;border:.4px solid #aaa;box-sizing:border-box"></div>
<div class="a" style="left:609.60px;top:96.00px;width:2.40px;height:332.00px;background:#c1c1c1;"></div>
<div class="a" style="left:69.00px;top:419.40px;width:467.00px;height:6.40px;background:#d9d9d9;"></div>
<div class="a" style="left:73.00px;top:419.60px;width:58.00px;height:6.00px;background:#c6c6c6;"></div>
<div class="t" style="left:93.20px;top:420.00px;font-size:4.75px;color:#333;">0 / 100</div>
<div class="a" style="left:69.00px;top:425.80px;width:467.00px;height:2.20px;background:repeating-linear-gradient(90deg,#9c9c9c 0,#9c9c9c .6px,#c8c8c8 .6px,#c8c8c8 2.33px);"></div>
<svg width="620" height="428" viewBox="0 0 620 428" style="left:0;top:0"><path d="M150.2 64.4 V187.4 M70.3 125.4 H229.8" stroke="#3c3c3c" stroke-width=".8"/>
<path d="M383.6 64.4 V187.4 M234 125.4 H534.6" stroke="#3c3c3c" stroke-width=".8"/>
<path d="M150.2 191.6 V417.6 M70.3 304.2 H229.8" stroke="#3c3c3c" stroke-width=".8"/>
<circle cx="209" cy="85.2" r="11.8" fill="none" stroke="#b8b8b8" stroke-width="2.1"/>
<rect x="204.6" y="80.8" width="8.8" height="8.8" fill="#b2b2b2" stroke="#cdcdcd" stroke-width=".5"/>
<text x="206.4" y="86" font-size="2.4" fill="#8a8a8a">TOP</text>
<path d="M209 71.8 l-1.2 1.6 h2.4z M209 98.6 l-1.2 -1.6 h2.4z M195.6 85.2 l1.6 -1.2 v2.4z M222.4 85.2 l-1.6 -1.2 v2.4z" fill="#d8d8d8"/>
<rect x="508" y="79.6" width="11" height="11.4" fill="#b4b4b4" stroke="#cfcfcf" stroke-width=".5"/>
<text x="509.6" y="86.2" font-size="2.4" fill="#8a8a8a">FRONT</text>
<path d="M499 92.2 c4 1.6 24 1.6 28 0" fill="none" stroke="#d6d6d6" stroke-width="1"/>
<rect x="202" y="206.4" width="11" height="10.4" fill="#adadad" stroke="#c8c8c8" stroke-width=".5"/>
<text x="204.6" y="212.6" font-size="2.4" fill="#888">LEFT</text>
<path d="M194 218.8 c4 1.6 24 1.6 28 0" fill="none" stroke="#d0d0d0" stroke-width="1"/>
<ellipse cx="513.1" cy="220" rx="13.8" ry="7.4" fill="none" stroke="#adadad" stroke-width="1.8"/>
<path d="M513 204.4 l8.2 3.2 v9.4 l-8.2 5 l-8.2 -5 v-9.4z" fill="#a6a6a6"/><path d="M513 204.4 l8.2 3.2 l-8.2 3.6 l-8.2 -3.6z" fill="#b2b2b2"/><path d="M513 211.2 v10.8 l-8.2 -5 v-9.4z" fill="#a4a4a4"/><path d="M513 211.2 v10.8 l8.2 -5 v-9.4z" fill="#9a9a9a"/>
<path d="M80.2 177.2 V167.6" stroke="#6aa86a" stroke-width=".9"/><path d="M80.2 177.2 H91.4" stroke="#b05050" stroke-width=".9"/><rect x="79.4" y="176.2" width="1.8" height="1.8" fill="#5a5ab0"/>
<text x="80.4" y="167.2" font-size="3.4" fill="#6aa86a">y</text><text x="90.6" y="176.6" font-size="3" fill="#b05050">x</text>
<path d="M243.4 177.2 V166.6" stroke="#5858b8" stroke-width="1"/><path d="M243.4 177.2 H254.6" stroke="#b05050" stroke-width=".9"/><rect x="242.6" y="176.2" width="1.8" height="1.8" fill="#5a9a5a"/>
<text x="243.4" y="166.4" font-size="3.2" fill="#5858b8">z</text>
<path d="M80.4 407.4 V397.6" stroke="#4848b8" stroke-width="1"/><path d="M80.4 407.4 H71.4" stroke="#5a9a5a" stroke-width=".9"/><rect x="79.6" y="406.4" width="1.8" height="1.8" fill="#b04848"/>
<text x="80" y="397.2" font-size="3.4" font-weight="bold" fill="#3a3ab8">z</text><text x="70.4" y="408" font-size="3" fill="#4a9a4a">y</text>
<path d="M243 407.4 L243.4 398" stroke="#5050c0" stroke-width="1.1"/><path d="M243 407.4 L237.4 403.6" stroke="#3c9c3c" stroke-width=".9"/><path d="M243 407.4 L251.2 403.6" stroke="#c04848" stroke-width=".9"/>
<text x="243.2" y="397.8" font-size="3.2" fill="#4040c0">z</text><text x="236" y="403.6" font-size="3" fill="#3c9c3c">y</text><text x="250.8" y="403.4" font-size="3" fill="#c04848">x</text>
<path d="M471.3 347.8 L323 274.2 M297.6 347.8 L444.5 274.2" stroke="#2e2e2e" stroke-width=".7"/>
<path d="M384.5 413.0 L447.0 361.0 M384.5 413.0 L322.0 361.0 M379.0 408.4 L441.5 358.5 M390.0 408.4 L327.5 358.5 M371.4 402.1 L433.9 355.2 M397.6 402.1 L335.1 355.2 M362.8 395.0 L425.3 351.3 M406.2 395.0 L343.7 351.3 M353.4 387.2 L415.9 347.1 M415.6 387.2 L353.1 347.1 M343.5 378.9 L406.0 342.6 M425.5 378.9 L363.0 342.6 M333.0 370.1 L395.5 337.9 M436.0 370.1 L373.5 337.9 M322.0 361.0 L384.5 333.0 M447.0 361.0 L384.5 333.0 " stroke="#c8c8c8" stroke-width=".4" opacity=".32" fill="none"/>
<path d="M543.5 65.6 v6.4 M540.3 68.8 h6.4" stroke="#2e2e2e" stroke-width=".9"/>
<rect x="551.2" y="63.9" width="10.00" height="9.6" fill="#b3bbb9"/>
<rect x="563.4" y="63.9" width="10.30" height="9.6" fill="#bababa"/>
<rect x="575.7" y="63.9" width="10.60" height="9.6" fill="#bababa"/>
<rect x="588.3" y="63.9" width="10.70" height="9.6" fill="#bababa"/>
<rect x="601.2" y="63.9" width="10.90" height="9.6" fill="#bababa"/>
<path d="M554.4 71.6 L559.8 65.8" stroke="#3aa8a0" stroke-width=".9"/><path d="M553 66 h6.6 v6 h-6.6z" fill="none" stroke="#8fc8c0" stroke-width=".4" stroke-dasharray=".8 .6"/>
<rect x="566.4" y="65.4" width="5" height="1.4" fill="#4a4a4a"/><path d="M567 69 h1.4 M570 69 h1.4 M567 71 h1.4 M570 71 h1.4" stroke="#777" stroke-width=".7"/>
<circle cx="581.6" cy="68.7" r="2.4" fill="#6a6a6a"/>
<rect x="590.6" y="65.4" width="6.4" height="4.2" fill="#505050"/><rect x="592.8" y="70.2" width="2" height=".9" fill="#505050"/>
<path d="M604.6 65.6 L609.6 71.6" stroke="#444" stroke-width="1.1"/>
<rect x="539.6" y="75.7" width="8.70" height="8.80" fill="#a6c0e8" stroke="#7ea6dc" stroke-width=".6"/>
<circle cx="544" cy="80.2" r="2.7" fill="#333"/>
<circle cx="552.4" cy="79" r="1.8" fill="#333"/><rect x="552.8" y="79.6" width="3" height="3" fill="#333" stroke="#cbcbcb" stroke-width=".4"/>
<circle cx="562.6" cy="79" r="1.9" fill="#333"/><rect x="561.8" y="80.6" width="1.6" height="2" fill="#333"/>
<rect x="569.2" y="78.2" width="4" height="4" rx=".5" fill="#333"/><path d="M573.4 80.2 l1.8 -1.6 v3.2z" fill="#333"/>
<path d="M579.6 77.4 V83 H584.8z" fill="none" stroke="#333" stroke-width="1"/>
<path d="M588.4 79 c1 -1.4 1.6 1.2 2.6 0 c1 -1.2 1.6 1.2 2.6 0 M588.4 81.4 c1 -1.4 1.6 1.2 2.6 0 c1 -1.2 1.6 1.2 2.6 0" fill="none" stroke="#a9a9a9" stroke-width=".8"/>
<circle cx="599" cy="78.8" r="1.4" fill="none" stroke="#333" stroke-width=".9"/><circle cx="601.8" cy="81.6" r="1.7" fill="none" stroke="#333" stroke-width=".9"/>
<path d="M605.4 90.4 h2.6 l-1.3 1.6z" fill="#333"/>
<path d="M541.6 100.6 h2 l-1 1.4z M541.6 168.2 h2 l-1 1.4z" fill="#555"/>
<path d="M603 100.4 h2.4 M603 101.6 h2.4 M603 102.8 h2.4 M603 168 h2.4 M603 169.2 h2.4 M603 170.4 h2.4" stroke="#d4d4d4" stroke-width=".5" stroke-dasharray=".6 .4"/>
<rect x="17.4" y="86.8" width="7.6" height="8.4" fill="#b0c6ea" stroke="#9ab4dc" stroke-width=".4"/>
<circle cx="21.2" cy="91" r="2.2" fill="#424242"/>
<circle cx="20.2" cy="99.2" r="1.8" fill="#424242"/><rect x="20.599999999999998" y="99.8" width="3" height="3" fill="#424242" stroke="#e1e1e1" stroke-width=".4"/>
<rect x="17.4" y="104.9" width="7.6" height="8.4" fill="#b0c6ea" stroke="#9ab4dc" stroke-width=".4"/>
<circle cx="21.2" cy="108.3" r="1.8" fill="#424242"/><rect x="20.4" y="109.89999999999999" width="1.6" height="1.8" fill="#424242"/>
<rect x="17.4" y="114.1" width="7.6" height="8.4" fill="#b0c6ea" stroke="#9ab4dc" stroke-width=".4"/>
<rect x="18.2" y="116.5" width="3.8" height="3.6" fill="#424242"/><path d="M22.2 118.3 l1.8 -1.5 v3z" fill="#424242"/>
<path d="M18.8 124.9 V130.3 H24.0z" fill="none" stroke="#424242" stroke-width="1"/>
<rect x="17.4" y="132.4" width="7.6" height="8.4" fill="#b9c9e4" stroke="#9ab4dc" stroke-width=".4"/>
<path d="M18.599999999999998 135.79999999999998 c1 -1.4 1.6 1.2 2.6 0 c1 -1.2 1.6 1.2 2.6 0 M18.599999999999998 138.0 c1 -1.4 1.6 1.2 2.6 0 c1 -1.2 1.6 1.2 2.6 0" fill="none" stroke="#9cb0d0" stroke-width=".7"/>
<rect x="17.8" y="142.20000000000002" width="6.8" height="7.2" fill="#2c5a60"/><path d="M19.4 147.60000000000002 L23.0 144.0" stroke="#e8e8e8" stroke-width="1"/><circle cx="23.0" cy="144.0" r=".9" fill="#e8e8e8"/>
<rect x="17.4" y="150.8" width="7.6" height="8.4" fill="#b0c6ea" stroke="#9ab4dc" stroke-width=".4"/>
<circle cx="21.2" cy="155" r="3" fill="#2c5a60"/><circle cx="21.2" cy="155" r="1.6" fill="#3f7a80"/>
<rect x="17.4" y="159.9" width="7.6" height="8.4" fill="#b0c6ea" stroke="#9ab4dc" stroke-width=".4"/>
<path d="M19.0 161.7 L23.599999999999998 166.7" stroke="#424242" stroke-width="1"/>
<rect x="18.2" y="170.2" width="6" height="6" fill="#3c4a5a"/><rect x="19.4" y="173.0" width="3.6" height="2.2" fill="#e8e8e8"/>
<rect x="17.4" y="178.1" width="7.6" height="8.4" fill="#c5d0e4" stroke="#9ab4dc" stroke-width=".4"/>
<path d="M19.0 180.3 l4.4 4 M23.4 180.3 l-4.4 4" stroke="#a0acc0" stroke-width=".6"/>
<rect x="17.4" y="186.8" width="7.6" height="8.4" fill="#b0c6ea" stroke="#9ab4dc" stroke-width=".4"/>
<circle cx="19.8" cy="191" r="1.2" fill="none" stroke="#424242" stroke-width=".8"/><circle cx="22.599999999999998" cy="191" r="1.2" fill="none" stroke="#424242" stroke-width=".8"/>
<rect x="19.0" y="199.4" width="4.4" height="5.4" fill="#f0f0f0" stroke="#555" stroke-width=".5"/><path d="M20.0 201 h2.4 M20.0 202.4 h2.4" stroke="#777" stroke-width=".4"/>
<rect x="19.0" y="208.4" width="4.4" height="5.4" fill="#3a3a3a"/>
<rect x="19.0" y="217.6" width="4.4" height="5.4" fill="#3a3a3a"/><rect x="20.4" y="219" width="1.6" height="2.4" fill="#aaa"/>
<path d="M19.599999999999998 229.6 c.8 -1.2 1.4 1 2.2 0 M19.599999999999998 232 c.8 -1.2 1.4 1 2.2 0 M21.2 229 v4.4" fill="none" stroke="#a8a8a8" stroke-width=".6"/>
<path d="M18.8 238.4 h4.8 l-1.8 2.2 v2.8 h-1.2 v-2.8z" fill="#424242"/>
<rect x="18.8" y="248.6" width="4.8" height="3.6" fill="#e8e8e8" stroke="#424242" stroke-width=".8"/><path d="M20.0 248.4 v-1 h2.4 v1" fill="none" stroke="#424242" stroke-width=".6"/>
<rect x="4.2" y="407" width="6.6" height="7" fill="#dcdcdc" stroke="#8a8a8a" stroke-width=".4"/><path d="M6.4 408.8 l2.6 1.7 l-2.6 1.7z" fill="#111"/>
<rect x="2.2" y="419.6" width="13" height="8.4" fill="#c4c4c4"/><rect x="3.8" y="421.6" width="3.8" height="4.8" fill="#a8a8a8" stroke="#8a8a8a" stroke-width=".4"/><rect x="9" y="421.6" width="3.8" height="4.8" fill="#a8a8a8" stroke="#8a8a8a" stroke-width=".4"/>
<rect x="33.6" y="419.2" width="6.4" height="4.6" fill="#d0d0d0"/><path d="M30.4 420.2 l-1.4 1.3 l1.4 1.3 M62.6 420.2 l1.4 1.3 l-1.4 1.3" fill="none" stroke="#222" stroke-width=".7"/>
<path d="M73.2 421.4 l-1.3 1.2 l1.3 1.2 M128.6 421.4 l1.3 1.2 l-1.3 1.2" fill="none" stroke="#666" stroke-width=".6"/></svg>
<div class="t" style="left:72.20px;top:67.00px;font-size:4.75px;color:#c2c2c2;transform:scaleX(0.986);">[+] [Top ] [Standard ] [Wireframe ]</div>
<div class="t" style="left:235.40px;top:67.00px;font-size:4.75px;color:#c2c2c2;">[+] [Front ] [Standard ] [Wireframe ]</div>
<div class="t" style="left:72.20px;top:194.00px;font-size:4.75px;color:#c2c2c2;">[+] [Left ] [Standard ] [Wireframe ]</div>
<div class="t" style="left:235.20px;top:193.50px;font-size:4.75px;color:#cdcdcd;transform:scaleX(0.946);">[+] [Perspective ] [Standard ] [Default Shading ]</div>
<div class="a" style="left:316.80px;top:201.40px;width:132.40px;height:73.20px;background:#fff;box-shadow:0 0 3px rgba(0,0,0,.5);border:.5px solid #666;box-sizing:border-box"></div>
<div class="a" style="left:317.30px;top:214.20px;width:131.40px;height:43.40px;background:#cdcdcd;"></div>
<div class="t" style="left:328.10px;top:205.50px;font-size:4.75px;color:#111;transform:scaleX(0.988);">AutoCAD DWG/DXF Import Problem</div>
<div class="t" style="left:341.00px;top:223.50px;font-size:4.75px;color:#222;transform:scaleX(0.885);">Unable to open:</div>
<div class="t" style="left:341.00px;top:233.50px;font-size:4.75px;color:#222;transform:scaleX(0.902);">C:\Users\Daniela\Desktop\Drawing1_1.dwg</div>
<div class="t" style="left:341.00px;top:243.50px;font-size:4.75px;color:#222;transform:scaleX(0.902);">The error code reported is eNotImplementedYet</div>
<div class="a" style="left:413.60px;top:262.20px;width:29.00px;height:8.40px;background:#b7b7b7;border:.5px solid #8a8a8a;box-sizing:border-box"></div>
<div class="t" style="left:424.60px;top:264.00px;font-size:4.75px;color:#222;transform:scaleX(0.903);">OK</div>
<svg width="620" height="428" viewBox="0 0 620 428" style="left:0;top:0"><text x="320.6" y="210" font-size="6.4" font-weight="bold" fill="#1ba8a4">3</text>
<path d="M439.8 205.2 l4 4 M443.8 205.2 l-4 4" stroke="#222" stroke-width=".6"/>
<path d="M331.1 223.9 l5.9 10.6 a.7 .7 0 0 1 -.6 1 h-10.6 a.7 .7 0 0 1 -.6 -1z" fill="#f7d622" stroke="#d8b400" stroke-width=".5"/>
<path d="M331.1 227.6 v4.2" stroke="#111" stroke-width="1.1"/><circle cx="331.1" cy="233.4" r=".65" fill="#111"/></svg>
</div></div></body></html>
